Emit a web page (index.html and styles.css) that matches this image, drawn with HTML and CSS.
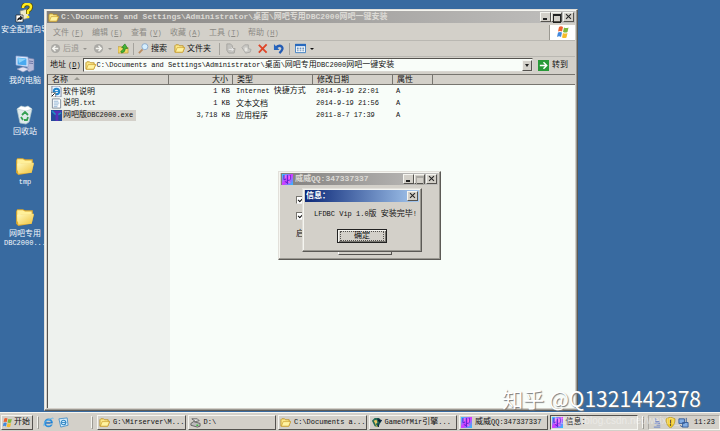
FILE: index.html
```html
<!DOCTYPE html>
<html lang="zh-CN">
<head>
<meta charset="utf-8">
<title>桌面</title>
<link rel="stylesheet" href="styles.css">
</head>
<body>
<svg class="defs" aria-hidden="true">
  <defs>
    <linearGradient id="fold" x1="0" y1="0" x2="1" y2="1"><stop offset="0" stop-color="#fffbc0"/><stop offset="1" stop-color="#f0c23c"/></linearGradient>
    <linearGradient id="app" x1="0" y1="0" x2="1" y2="1"><stop offset="0" stop-color="#28d8ff"/><stop offset=".5" stop-color="#d838ff"/><stop offset="1" stop-color="#20c8ff"/></linearGradient>
    <symbol id="i-folder" viewBox="0 0 18 18"><path d="M1 4l1-2 5 0 2 1 7 0v3l1 1-2 8-12 2-2-2z" fill="#dda82c"/><path d="M2 3h5l2 1 6 0v3H5L2 14z" fill="#fff09a"/><path d="M2 7l15-1-2 9-12 1z" fill="url(#fold)"/></symbol>
    <symbol id="i-open" viewBox="0 0 12 12"><path d="M1 10V3l1-1h3l1 1h4v2h1.500l-2 5z" fill="#fbe88a" stroke="#b98c1c" stroke-width=".9"/><path d="M1.500 10l2-5h8l-2 5z" fill="#fff3a0" stroke="#c99a28" stroke-width=".7"/></symbol>
    <symbol id="i-app" viewBox="0 0 12 12"><path d="M0 0h12v12H0z" fill="url(#app)"/><path d="M2 1v5h2V2M6 1v10M9 1v5L5 8M3 8l3 2" fill="none" stroke="#6420d0" stroke-width="1"/><path d="M4 1v4M8 2v4M7 8l2 2" stroke="#ff5cf0" stroke-width="1.400"/></symbol>
    <symbol id="i-win" viewBox="0 0 14 14"><path d="M3 2q2-1.500 4 0L6 6.500q-2-1-4 0z" fill="#ee6230"/><path d="M8 2.500q2 1 4.500 0L11.500 7q-2 1-4.500 0z" fill="#7fb83c"/><path d="M2 7.500q2-1 4 0L5 12q-2-1.500-4 0z" fill="#4188dc"/><path d="M7 8q2 1 4.500 0l-1 4.500q-2 1-4.500 0z" fill="#f5bd2c"/></symbol>
    <symbol id="i-ie" viewBox="0 0 12 12"><circle cx="6" cy="6.500" r="3.800" fill="none" stroke="#2d8fdc" stroke-width="2"/><path d="M3 6.500h6.500" stroke="#1768c0" stroke-width="1.500"/><path d="M1 10Q0 6 6 3t5-1" fill="none" stroke="#65b9ee"/><path d="M8 8.200h4v-1.200H8z" fill="#d3d0c9"/></symbol>
  </defs>
</svg>

<div class="screen">
<main class="desktop">
  <nav class="shortcuts">
    <a href="#" class="shortcut"><svg class="ic-l" viewBox="0 0 20 20"><path d="M5 8l7-2 2 9-8 2z" fill="#eee9c8" stroke="#887" stroke-width=".7"/><path d="M8 5q0-4 4-4t4 3q0 2-3 4v3" fill="none" stroke="#554c00" stroke-width="4"/><path d="M8 5q0-4 4-4t4 3q0 2-3 4v3M13 13v2" fill="none" stroke="#ffec20" stroke-width="2.500"/><path d="M1 12h7v7H1z" fill="#fff" stroke="#222" stroke-width=".7"/><path d="M2.500 17.500q0-3 3-3V13l2 2-2 2v-1" fill="#111" stroke="#111" stroke-width=".7"/></svg><span>安全配置向导</span></a>
    <a href="#" class="shortcut"><svg class="ic-l" viewBox="0 0 20 20"><path d="M13 4l6 1v11l-5 2-2-2z" fill="#b6bad8" stroke="#7380ab" stroke-width=".6"/><path d="M14 7l4 .5M14 9l4 .5" stroke="#6b76a5"/><path d="M1 2l12 1v10L1 11z" fill="#e5eeff" stroke="#8aa1cf" stroke-width=".7"/><path d="M2.500 3.500l9 1v7l-9-1z" fill="#4aa9ef"/><path d="M3 4l8 1-7 4z" fill="#8bd2fa"/><path d="M2 15l6-2 6 2-6 3z" fill="#e2e2f2" stroke="#8e98bd" stroke-width=".6"/></svg><span>我的电脑</span></a>
    <a href="#" class="shortcut"><svg class="ic-l" viewBox="0 0 20 20"><path d="M2 4l15 0-3 13-3 2-6-1z" fill="#dfeaea" stroke="#adc5cc" stroke-width=".7"/><path d="M2 4l4-3 4 1 3-1 4 3-6 2z" fill="#fff" stroke="#b8ccd0" stroke-width=".6"/><path d="M7 10l3-3 3 3M13 12l-1 3-3 0M8 15l-2-3" fill="none" stroke="#35a052" stroke-width="1.800"/></svg><span>回收站</span></a>
    <a href="#" class="shortcut"><svg class="ic-l"><use href="#i-folder"/></svg><span class="en">tmp</span></a>
    <a href="#" class="shortcut"><svg class="ic-l"><use href="#i-folder"/></svg><span>网吧专用<br><span class="en">DBC2000...</span></span></a>
  </nav>

  <section class="window explorer" aria-label="资源管理器">
    <header class="title">
      <svg class="ic"><use href="#i-open"/></svg>
      <h1><span class="path">C:\Documents and Settings\Administrator\</span>桌面\网吧专用<span class="path">DBC2000</span>网吧一键安装</h1>
      <div class="caps"><button class="cap min" aria-label="最小化"></button><button class="cap max" aria-label="最大化"></button><button class="cap close" aria-label="关闭"></button></div>
    </header>
    <div class="menubar">
      <button>文件<span class="en key">(<u>F</u>)</span></button><button>编辑<span class="en key">(<u>E</u>)</span></button><button>查看<span class="en key">(<u>V</u>)</span></button><button>收藏<span class="en key">(<u>A</u>)</span></button><button>工具<span class="en key">(<u>T</u>)</span></button><button>帮助<span class="en key">(<u>H</u>)</span></button>
      <span class="flag"><svg class="ic-f"><use href="#i-win"/></svg></span>
    </div>
    <div class="toolbar">
      <button class="dim"><svg class="ic" viewBox="0 0 12 12"><circle cx="6" cy="6" r="5" fill="#aaa9a5"/><path d="M9 6H3.500M6 3L3 6l3 3" fill="none" stroke="#f5f5f0" stroke-width="1.500"/></svg>后退<i class="drop"></i></button>
      <button class="dim" aria-label="前进"><svg class="ic" viewBox="0 0 12 12"><circle cx="6" cy="6" r="5" fill="#aaa9a5"/><path d="M3 6h5.500M6 3l3 3-3 3" fill="none" stroke="#f5f5f0" stroke-width="1.500"/></svg><i class="drop"></i></button>
      <button aria-label="向上"><svg class="ic" viewBox="0 0 12 12"><path d="M0 4h4l1 1h6v6H0z" fill="#f3d768" stroke="#b99532" stroke-width=".7"/><path d="M4 11q4-1 4-5h2.500L7.500 1 4 5h2q0 3-3 4z" fill="#45b536" stroke="#207818" stroke-width=".7"/></svg></button>
      <i class="sep"></i>
      <button><svg class="ic" viewBox="0 0 12 12"><path d="M5 7l-4 4" stroke="#bb8d60" stroke-width="2"/><circle cx="7.500" cy="4" r="3.300" fill="#d5efff" stroke="#8ba8ca"/></svg>搜索</button>
      <button class="wide"><svg class="ic"><use href="#i-open"/></svg>文件夹</button>
      <i class="sep"></i>
      <button aria-label="移至"><svg class="ic" viewBox="0 0 12 12"><path d="M2 1h4l2 2v3h3l-1 5H4L2 8z" fill="#c3c2be" stroke="#a5a4a0"/><path d="M4 7h5M7 5l2 2-2 2" fill="none" stroke="#eee"/></svg></button>
      <button aria-label="复制到"><svg class="ic" viewBox="0 0 12 12"><path d="M1 5l3-3h4v4l3 1-1 3-5 1z" fill="#c9c8c4" stroke="#aaa9a5"/><path d="M4 5h3v4H4z" fill="#e8e7e2"/></svg></button>
      <button aria-label="删除"><svg class="ic" viewBox="0 0 12 12"><path d="M2 2l8.500 8.500M10.500 1.500L2 10.500" stroke="#df4528" stroke-width="2"/></svg></button>
      <button aria-label="撤消"><svg class="ic" viewBox="0 0 12 12"><path d="M3 5q4-3.500 6.500-1T7 11" fill="none" stroke="#245cb4" stroke-width="2.500"/><path d="M1 1v6.500h6z" fill="#2867bf"/></svg></button>
      <i class="sep"></i>
      <button aria-label="查看方式"><svg class="ic" viewBox="0 0 12 12"><path d="M.5 1.500h11v9H.5z" fill="#fff" stroke="#397bc0"/><path d="M0 1h12v2.500H0z" fill="#2869bd"/><path d="M2 5h2v2H2zM5 5h2v2H5zM8 5h2v2H8zM2 8h2v1H2zM5 8h2v1H5zM8 8h2v1H8z" fill="#6a91ba"/></svg><i class="drop"></i></button>
    </div>
    <form class="address">
      <label for="addr">地址<span class="en key">(<u>D</u>)</span></label>
      <div class="combo" id="addr" role="combobox" tabindex="0" aria-expanded="false"><svg class="ic"><use href="#i-open"/></svg><span><span class="en">C:\Documents and Settings\Administrator\</span>桌面<span class="en">\</span>网吧专用<span class="en">DBC2000</span>网吧一键安装</span><button type="button" class="arrow" aria-label="展开"></button></div>
      <button type="button" class="go"><svg class="ic" viewBox="0 0 12 12"><path d="M0 0h12v12H0z" fill="#299a38"/><path d="M2 6h7M6 2.500L9.500 6 6 9.500" fill="none" stroke="#fff" stroke-width="1.600"/></svg>转到</button>
    </form>
    <div class="files">
      <table>
        <colgroup><col class="c-name"><col class="c-size"><col class="c-type"><col class="c-date"><col class="c-attr"><col></colgroup>
        <thead><tr><th>名称 <i class="sort"></i></th><th class="num">大小</th><th>类型</th><th>修改日期</th><th>属性</th><th></th></tr></thead>
        <tbody>
          <tr><td><span class="file"><svg class="ic" viewBox="0 0 12 12"><path d="M1 0h8l2 2v10H1z" fill="#e8f4ff" stroke="#557" stroke-width=".7"/><circle cx="6" cy="6" r="3" fill="none" stroke="#2385cb" stroke-width="2"/><path d="M3 6h6" stroke="#2385cb"/><path d="M0 7h5v5H0z" fill="#fff" stroke="#333" stroke-width=".5"/><path d="M1 11l3-3" stroke="#000"/></svg>软件说明</span></td><td class="num en">1 KB</td><td><span class="en">Internet </span>快捷方式</td><td class="en">2014-9-19 22:01</td><td class="en">A</td><td></td></tr>
          <tr><td><span class="file"><svg class="ic" viewBox="0 0 12 12"><path d="M1.500 1h8l1 1v9h-9z" fill="#fff" stroke="#7b8796"/><path d="M3 3.500h5M3 5.500h6M3 7.500h5M3 9.500h4" stroke="#6b9bc5" stroke-width=".8"/></svg><span>说明<span class="en">.txt</span></span></span></td><td class="num en">1 KB</td><td>文本文档</td><td class="en">2014-9-19 21:56</td><td class="en">A</td><td></td></tr>
          <tr><td><span class="file selected"><svg class="ic" viewBox="0 0 12 12"><path d="M0 0h12v12H0z" fill="#254a9a"/><path d="M0 1h12L8 6v6H5V6z" fill="#5830b8"/><path d="M1 1l4 4M8 5l3-2" stroke="#179ac0" stroke-width="1.500"/></svg><span>网吧版<span class="en">DBC2000.exe</span></span></span></td><td class="num en">3,718 KB</td><td>应用程序</td><td class="en">2011-8-7 17:39</td><td class="en">A</td><td></td></tr>
        </tbody>
      </table>
    </div>
  </section>

  <section class="window installer" aria-label="安装程序">
    <header class="title">
      <svg class="ic"><use href="#i-app"/></svg>
      <h2>威威<span class="path">QQ:347337337</span></h2>
      <div class="caps"><button class="cap min" aria-label="最小化"></button><button class="cap max off" aria-label="最大化" disabled></button><button class="cap close" aria-label="关闭"></button></div>
    </header>
    <div class="options">
      <input type="checkbox" checked aria-label="选项一">
      <input type="checkbox" checked aria-label="选项二">
      <span>启</span>
    </div>
    <button class="run" aria-label="安装"></button>
  </section>

  <section class="window message" role="dialog" aria-label="信息">
    <header class="title active">
      <h2>信息：</h2>
      <div class="caps"><button class="cap close" aria-label="关闭"></button></div>
    </header>
    <p><span class="en">LFDBC Vip 1.0</span>版<span class="en"> </span>安装完毕<span class="en">!</span></p>
    <button class="ok"><span>确定</span></button>
  </section>

  <div class="mark">知乎 @Q1321442378</div>
</main>

<footer class="taskbar">
  <button class="start"><svg class="ic"><use href="#i-win"/></svg>开始</button>
  <i class="grip"></i>
  <div class="quick">
    <button aria-label="浏览器"><svg class="ic"><use href="#i-ie"/></svg></button>
    <button aria-label="显示桌面"><svg class="ic" viewBox="0 0 12 12"><path d="M1 2l9-1 1 8-8 2z" fill="#d5edfc" stroke="#4b92c8"/><circle cx="6" cy="6" r="2.500" fill="none" stroke="#3388c5" stroke-width="1.200"/><path d="M4 6h5" stroke="#3388c5"/></svg></button>
  </div>
  <i class="grip"></i>
  <div class="tasks">
    <button class="task"><svg class="ic"><use href="#i-open"/></svg><span class="en">G:\Mirserver\M...</span></button>
    <button class="task"><svg class="ic" viewBox="0 0 12 12"><path d="M1 7l3-2 7 2v3l-3 1-7-2z" fill="#bbb" stroke="#444" stroke-width=".8"/><path d="M2 2h6l2 2-4 1z" fill="#e8e8e8" stroke="#444" stroke-width=".8"/><path d="M7 9h2" stroke="#3b3" stroke-width="1.500"/></svg><span class="en">D:\</span></button>
    <button class="task"><svg class="ic"><use href="#i-open"/></svg><span class="en">C:\Documents a...</span></button>
    <button class="task"><svg class="ic" viewBox="0 0 12 12"><path d="M1 4l3-3 5 0 2 4-3 6-4-1z" fill="#236b55"/><path d="M3 4l3-1 1 3-2 2z" fill="#e9c763"/><path d="M7 2l4 2-2 2M8 7v4" stroke="#122e48" stroke-width="1.500"/><path d="M5 8l2 3" stroke="#d8b830"/></svg><span><span class="en">GameOfMir</span>引擎<span class="en">...</span></span></button>
    <button class="task"><svg class="ic"><use href="#i-app"/></svg><span>威威<span class="en">QQ:347337337</span></span></button>
    <button class="task current"><svg class="ic"><use href="#i-app"/></svg>信息：</button>
  </div>
  <i class="grip"></i>
  <div class="tray">
    <svg class="ic" viewBox="0 0 12 12"><path d="M4 1v4h4M3 7h6M5 9h4M2 11h7" fill="none" stroke="#7f91c8" stroke-width="1.300"/></svg>
    <svg class="ic" viewBox="0 0 12 12"><path d="M6 0l5 2q0 7-5 10Q1 9 1 2z" fill="#f4cd28" stroke="#a48a30" stroke-width=".7"/><path d="M6 3v4M6 8v1.500" stroke="#333" stroke-width="1.200"/></svg>
    <svg class="ic" viewBox="0 0 12 12"><path d="M1 2h6v5H1zM5 6h6v5H5z" fill="#83aee4" stroke="#345c98"/><path d="M9 1v5M2 9l3 2" stroke="#345c98"/></svg>
    <time class="en">11:23</time>
  </div>
  <span class="source">https://blog.csdn.net/weixin_</span>
</footer>
</div>
</body>
</html>
```

FILE: styles.css
```css
:root {
  --face: #d3d0c9;
  --light: #f5f5f0;
}
* { box-sizing: border-box; }
body {
  margin: 0;
  background: #386aa0;
  color: #111;
  font: 8px/12px "Liberation Mono", "Noto Sans CJK SC", monospace;
}
.defs { position: absolute; width: 0; height: 0; }
h1, h2, p { margin: 0; font-size: 8px; }
button { font: inherit; color: inherit; border: 0; padding: 0; margin: 0; background: none; }
.en { font-size: 7px; }
.key { margin-left: 2px; }
.ic { width: 11px; height: 11px; flex: none; }
.ic-l { width: 20px; height: 20px; flex: none; }
.ic-f { width: 14px; height: 14px; }

.screen { display: flex; flex-direction: column; height: 100vh; }
.desktop { position: relative; flex: 1; min-height: 0; overflow: hidden; }

.shortcuts { display: flex; flex-direction: column; gap: 16px; width: 50px; padding-top: 3px; }
.shortcut {
  display: flex; flex-direction: column; align-items: center;
  color: #f4f8fc; text-decoration: none; text-align: center; white-space: nowrap;
  height: 35px; line-height: 9px; gap: 2px;
}

.window {
  position: absolute;
  display: flex; flex-direction: column;
  background: var(--face);
  border: 1px solid; border-color: #e2e0da #5c5a56 #5c5a56 #e2e0da;
  box-shadow: inset -1px -1px #9b9992, inset 1px 1px var(--light);
  padding: 1px 2px 2px;
}
.title {
  display: flex; align-items: center; gap: 2px;
  height: 12px; padding: 0 1px; margin-bottom: 2px; flex: none;
  background: linear-gradient(90deg, #817f7d, #c0bfbd);
  color: #dcdad5; white-space: nowrap;
}
.title h1, .title h2 { flex: 1; overflow: hidden; font-weight: bold; }
.title.active { background: linear-gradient(90deg, #0c2878, #a5c8ee); color: #fff; }
.caps { display: flex; }
.cap {
  position: relative;
  width: 11px; height: 10px;
  background: var(--face);
  border: 1px solid; border-color: var(--light) #55534f #55534f var(--light);
}
.cap.close { margin-left: 1px; }
.cap::before, .cap.close::after { content: ""; position: absolute; }
.min::before { left: 2px; bottom: 1px; width: 4px; height: 2px; background: #222; }
.max::before { left: 1px; top: 1px; width: 6px; height: 6px; border: 1px solid #222; border-top-width: 2px; }
.max.off::before { border-color: #aaa8a2; }
.close::before, .cap.close::after { left: 1px; top: 3px; width: 7px; height: 1px; background: #222; transform: rotate(45deg); }
.cap.close::after { transform: rotate(-45deg); }

.explorer { left: 44px; right: 142px; top: 9px; bottom: 1px; }
.menubar, .toolbar, .address { display: flex; align-items: center; height: 16px; flex: none; white-space: nowrap; }
.menubar { gap: 12px; padding-left: 6px; color: #8c8a85; border-bottom: 1px solid #bab8b2; }
.menubar button { width: 27px; text-align: left; }
.flag { display: flex; justify-content: center; align-self: stretch; width: 26px; margin-left: auto; background: #fff; border-left: 1px solid #9b9992; }
.toolbar { gap: 4px; padding-left: 3px; border-bottom: 1px solid #bab8b2; }
.toolbar button { display: flex; align-items: center; gap: 2px; }
.toolbar .dim { color: #96948f; margin-right: 2px; }
.toolbar .wide { margin: 0 3px; }
.toolbar .wide ~ * { margin-left: 1px; }
.drop { border: 2px solid transparent; border-top-color: currentColor; border-bottom: 0; margin-left: 2px; }
.sep { width: 1px; height: 12px; background: #a5a39d; }
.address { gap: 2px; padding: 0 2px 0 3px; }
.combo {
  flex: 1; display: flex; align-items: center; gap: 1px; height: 14px; padding-left: 1px;
  background: #f9fdf9; border: 1px solid; border-color: #55534f #d9d7d1 #d9d7d1 #55534f;
}
.arrow {
  display: flex; align-items: center; justify-content: center; width: 10px; height: 11px; margin-left: auto;
  background: var(--face); border: 1px solid; border-color: var(--light) #55534f #55534f var(--light);
}
.arrow::before { content: ""; border: 2px solid transparent; border-top: 3px solid #222; border-bottom: 0; }
.go { display: flex; align-items: center; gap: 3px; margin-left: 3px; width: 35px; }

.files {
  flex: 1; margin-top: 1px; min-height: 0;
  background: linear-gradient(90deg, #eef2ee 122px, #f8fdf9 122px);
  border-left: 1px solid #55534f; border-top: 1px solid #77756f;
}
table { width: 100%; table-layout: fixed; border-collapse: separate; border-spacing: 0; white-space: nowrap; }
.c-name { width: 121px; }
.c-size { width: 64px; }
.c-type { width: 80px; }
.c-date { width: 80px; }
.c-attr { width: 40px; }
th {
  height: 10px; line-height: 9px; padding: 0 4px; font-weight: normal; text-align: left;
  background: var(--face); border-right: 1px solid #77756f; border-bottom: 1px solid #77756f;
}
th:last-child { border-right: 0; }
.sort { display: inline-block; border: 3px solid transparent; border-bottom: 3px solid #9b9992; border-top: 0; margin: 0 0 2px 1px; }
td { height: 12px; line-height: 11px; padding: 0 3px; }
td:first-child { padding: 0 0 0 3px; }
.num { text-align: right; }
.file { display: inline-flex; align-items: center; gap: 1px; height: 11px; vertical-align: top; }
.selected { background: #d3d0c9; padding-right: 3px; }

.installer { left: 278px; top: 171px; width: 163px; height: 89px; }
.options { display: flex; flex-direction: column; gap: 8px; padding: 9px 0 0 15px; }
.options input {
  appearance: none; width: 8px; height: 8px; margin: 0; background: #fff;
  border: 1px solid; border-color: #77756f #eee #eee #77756f;
}
.options input::before { content: ""; display: block; width: 4px; height: 2px; margin: 1px; border: solid #111; border-width: 0 0 1px 1px; transform: rotate(-45deg); }
.run { width: 54px; height: 12px; margin: auto 46px 2px auto; background: var(--face); border: 1px solid #55534f; border-top-color: #fff; border-left-color: #fff; }

.message { left: 302px; top: 188px; width: 120px; height: 64px; }
.message p { padding: 4px 0 0 9px; white-space: nowrap; }
.ok {
  width: 50px; height: 14px; margin: 9px auto 0; padding: 1px;
  background: var(--face); border: 1px solid #222;
  box-shadow: inset 1px 1px var(--light), inset -1px -1px #77756f;
}
.ok span { display: block; margin: 0 1px; line-height: 8px; border: 1px dotted #55534f; }

.mark {
  position: absolute; right: 19px; bottom: 0;
  font: 21px/28px "Noto Sans CJK SC", sans-serif; color: #fff; white-space: nowrap;
  text-shadow: 1px 1px 1px #777;
}

.taskbar {
  position: relative;
  display: flex; align-items: center; gap: 4px; flex: none; height: 19px; padding: 1px 0 1px 1px;
  background: var(--face); border-top: 1px solid var(--light); white-space: nowrap;
}
.source {
  position: absolute; right: 40px; top: 1px;
  font: 10px/14px "Liberation Sans", sans-serif; color: #fff; opacity: .4; pointer-events: none;
}
.start, .task {
  display: flex; align-items: center; height: 15px;
  background: var(--face); border: 1px solid; border-color: var(--light) #55534f #55534f var(--light);
}
.start { width: 32px; gap: 1px; }
.grip { width: 2px; height: 13px; border: 1px solid; border-color: var(--light) #9b9992 #9b9992 var(--light); }
.quick { display: flex; gap: 4px; width: 44px; }
.quick button { display: flex; }
.tasks { display: flex; flex: 1; gap: 2px; min-width: 0; }
.task { flex: 1; min-width: 0; gap: 3px; padding-left: 1px; overflow: hidden; }
.task.current { background: #dedcd6; border-color: #55534f var(--light) var(--light) #55534f; }
.tray { display: flex; align-items: center; gap: 2px; width: 72px; height: 15px; padding-left: 3px; border: 1px solid; border-color: #aaa8a2 var(--light) var(--light) #aaa8a2; }
.tray time { margin-left: 3px; }
```
